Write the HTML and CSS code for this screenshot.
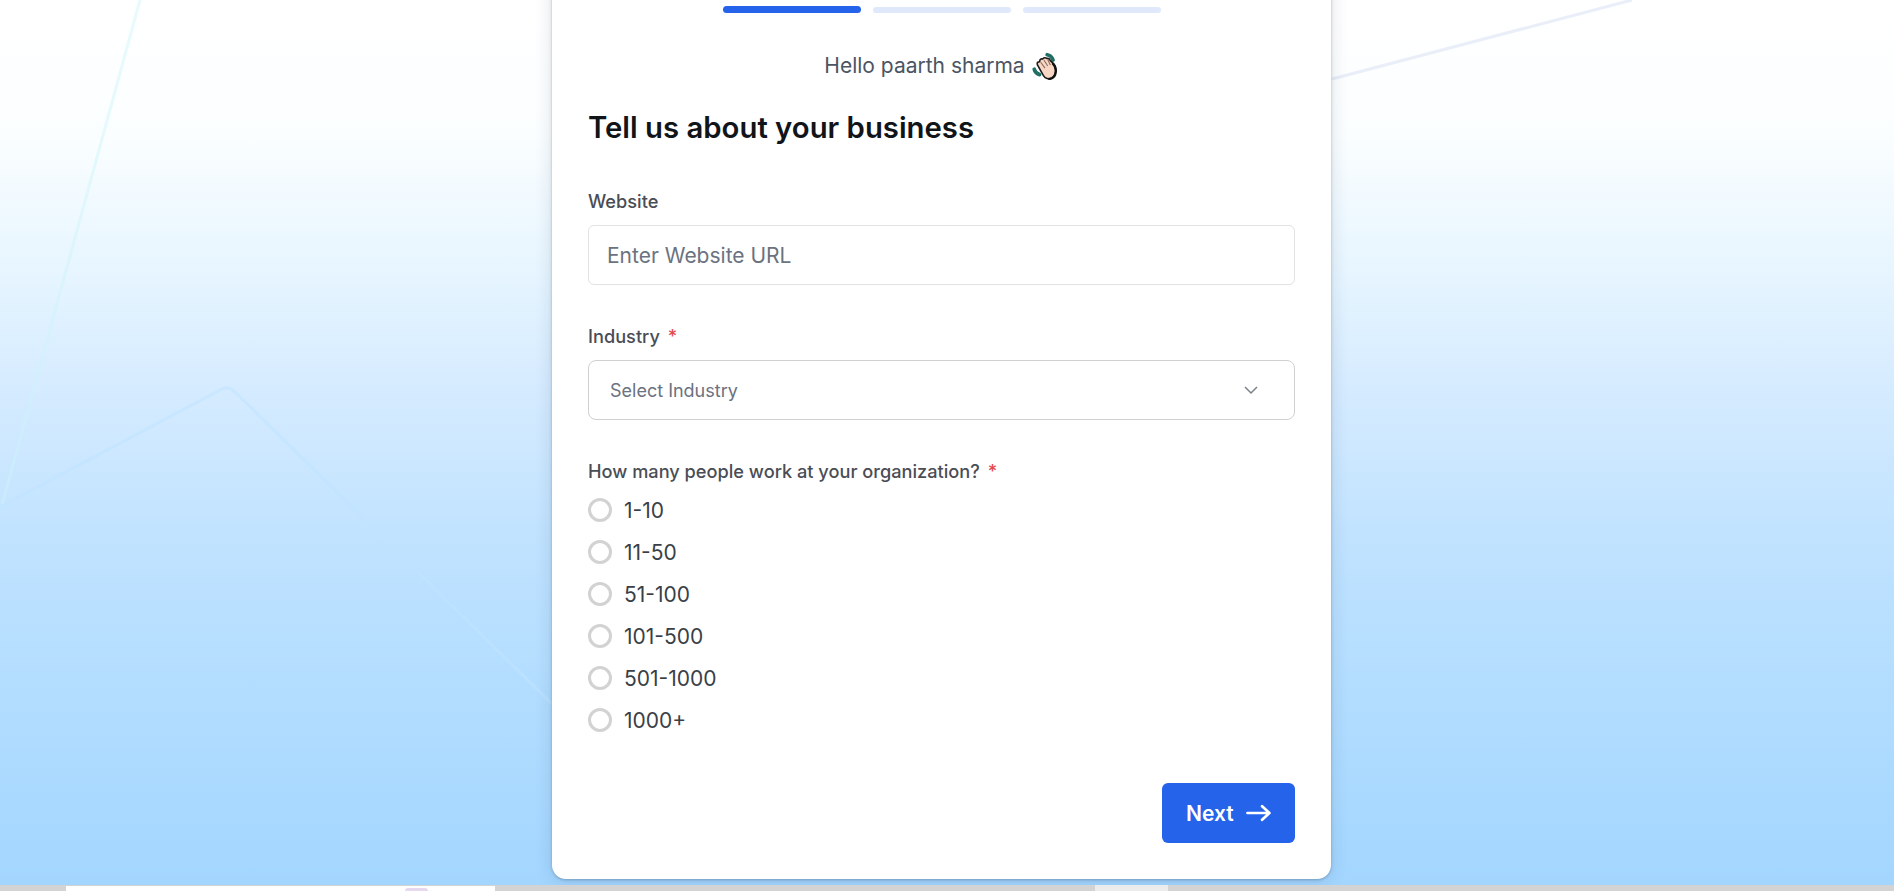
FILE: index.html
```html
<!DOCTYPE html>
<html lang="en">
<head>
  <meta charset="UTF-8">
  <meta name="viewport" content="width=device-width, initial-scale=1.0">
  <title>Tell us about your business</title>
  <link rel="stylesheet" href="styles.css">
</head>
<body>
  <div class="page">
    <svg class="bg-lines" width="1894" height="885" viewBox="0 0 1894 885" fill="none">
      <path class="line-cyan" d="M140 0 L2 505"/>
      <path class="line-blue" d="M0 507 L222 389 Q228 386 234 391 L553 705"/>
      <path class="line-grey" d="M1332 79 L1632 0"/>
    </svg>

    <div class="card">
      <div class="steps">
        <div class="step active"></div>
        <div class="step"></div>
        <div class="step"></div>
      </div>

      <p class="hello">Hello paarth sharma
        <svg class="wave" width="28" height="28" viewBox="0 0 26 26">
          <path d="M15 2.5 Q19 3 20.5 7.5" stroke="#1f6f64" stroke-width="3.4" fill="none" stroke-linecap="round"/>
          <path d="M3 16 Q4 20 8 21" stroke="#1f6f64" stroke-width="3.4" fill="none" stroke-linecap="round"/>
          <path d="M6 12 Q5 9 8 9 Q8 6 11 6.5 Q12 4.5 15 6 Q17 5.5 18 8 L21 11 Q23.5 14 23 18 Q22.5 24.5 17 25 Q12.5 25 10.5 20 Z" fill="#f7d7c4" stroke="#1b1b1b" stroke-width="1.5" stroke-linejoin="round"/>
          <path d="M20.5 11 Q23.5 14 23 18 Q22.5 24.5 17 25" stroke="#111" stroke-width="2.2" fill="none" stroke-linecap="round"/>
          <path d="M9 9.5 L13 15 M12 7.5 L15.5 13 M15.5 7 L18 12" stroke="#8a6a5c" stroke-width="1" fill="none"/>
        </svg>
      </p>

      <h1>Tell us about your business</h1>

      <div class="field first">
        <label for="website">Website</label>
        <input class="text-input" type="text" id="website" placeholder="Enter Website URL">
      </div>

      <div class="field">
        <label>Industry <span class="req">*</span></label>
        <div class="select">
          <span>Select Industry</span>
          <svg width="16" height="16" viewBox="0 0 16 16" fill="none">
            <path d="M2 5 L8 11 L14 5" stroke="#7b8088" stroke-width="1.5"/>
          </svg>
        </div>
      </div>

      <div class="field-last">
        <label>How many people work at your organization? <span class="req">*</span></label>
        <div class="radio-list">
          <div class="radio-row"><span class="radio"></span>1-10</div>
          <div class="radio-row"><span class="radio"></span>11-50</div>
          <div class="radio-row"><span class="radio"></span>51-100</div>
          <div class="radio-row"><span class="radio"></span>101-500</div>
          <div class="radio-row"><span class="radio"></span>501-1000</div>
          <div class="radio-row"><span class="radio"></span>1000+</div>
        </div>
      </div>

      <div class="actions">
        <button class="next">Next
          <svg width="26" height="18" viewBox="0 0 26 18" fill="none">
            <path d="M1.5 9 H24 M16.5 2 L24 9 L16.5 16" stroke="#fff" stroke-width="2.8" stroke-linecap="round" stroke-linejoin="round"/>
          </svg>
        </button>
      </div>
    </div>
  </div>

  <div class="strip">
    <div class="strip-thumb"><div class="strip-blob"></div></div>
    <div class="strip-tab"></div>
  </div>
</body>
</html>
```

FILE: styles.css
```css
* {
  box-sizing: border-box;
}

html, body {
  margin: 0;
  padding: 0;
  height: 100%;
  overflow: hidden;
}

body {
  font-family: Inter, "Liberation Sans", sans-serif;
  display: flex;
  flex-direction: column;
}

.page {
  position: relative;
  height: 885px;
  overflow: hidden;
  display: flex;
  flex-direction: column;
  align-items: center;
  justify-content: flex-end;
  padding: 0 11px 6px 0;
  background: linear-gradient(180deg, #ffffff 0%, #fbfeff 15%, #e6f5ff 31%, #d5ebff 44%, #bfe2ff 62%, #b2ddff 78%, #a3d6ff 100%);
}

.bg-lines {
  position: absolute;
  top: 0;
  left: 0;
}

.bg-lines path {
  stroke-width: 3;
}

.line-cyan {
  stroke: rgba(205, 244, 248, 0.45);
}

.line-blue {
  stroke: rgba(192, 228, 255, 0.55);
}

.line-grey {
  stroke: rgba(228, 234, 246, 0.8);
}

.card {
  position: relative;
  flex: none;
  width: 779px;
  padding: 36px;
  background-color: #fff;
  border-radius: 14px;
  box-shadow: 0 1px 3px rgba(30, 50, 80, 0.3), 0 2px 18px rgba(30, 50, 80, 0.14);
}

.steps {
  display: flex;
  justify-content: center;
  align-items: center;
  gap: 12px;
}

.step {
  width: 138px;
  height: 6px;
  border-radius: 4px;
  background-color: #dfe9fb;
}

.step.active {
  height: 7px;
  background-color: #2563eb;
}

.hello {
  display: flex;
  justify-content: center;
  align-items: center;
  gap: 6px;
  margin: 39px 0 0;
  font-size: 21px;
  line-height: 24px;
  color: #4b5563;
}

h1 {
  margin: 30px 0 3px;
  font-size: 29.3px;
  line-height: 36px;
  font-weight: 600;
  color: #111418;
}

label {
  display: block;
  font-size: 18.2px;
  line-height: 22px;
  font-weight: 550;
  color: #4a4d55;
}

.req {
  margin-left: 3px;
  color: #e5484d;
}

.field {
  padding-top: 40px;
}

.field.first {
  padding-top: 41px;
}

.field.first label {
  margin-bottom: -1px;
}

.text-input {
  display: block;
  width: 100%;
  height: 60px;
  margin-top: 14px;
  padding: 0 18px;
  border: 1px solid #e2e2e4;
  border-radius: 6px;
  font-family: inherit;
  font-size: 21px;
  outline: none;
}

.text-input::placeholder {
  color: #6b7280;
}

.select {
  display: flex;
  align-items: center;
  justify-content: space-between;
  height: 60px;
  margin-top: 13px;
  padding: 0 35px 0 21px;
  border: 1px solid #cfd0d2;
  border-radius: 8px;
  font-size: 18px;
  color: #6b7280;
}

.field-last {
  padding-top: 40px;
}

.radio-list {
  margin-top: 7px;
}

.radio-row {
  display: flex;
  align-items: center;
  gap: 12px;
  height: 42px;
  font-size: 21px;
  color: #3a3f47;
}

.radio {
  width: 24px;
  height: 24px;
  border: 3px solid #d2d2d2;
  border-radius: 50%;
}

.actions {
  display: flex;
  justify-content: flex-end;
  margin-top: 42px;
}

.next {
  display: flex;
  align-items: center;
  gap: 12px;
  width: 133px;
  height: 60px;
  padding: 0 24px;
  border: none;
  border-radius: 6px;
  background-color: #2563eb;
  color: #fff;
  font-family: inherit;
  font-size: 21px;
  font-weight: 600;
}

.strip {
  flex: 1;
  display: flex;
  background-color: #d3d3d3;
}

.strip-thumb {
  width: 429px;
  height: 5px;
  margin: 1px 0 0 66px;
  padding: 2px 0 0 339px;
  background-color: #fff;
}

.strip-blob {
  width: 23px;
  height: 3px;
  border-radius: 6px 6px 0 0;
  background-color: #e6d8ee;
}

.strip-tab {
  width: 73px;
  margin-left: 600px;
  background-color: #ececec;
}
```
